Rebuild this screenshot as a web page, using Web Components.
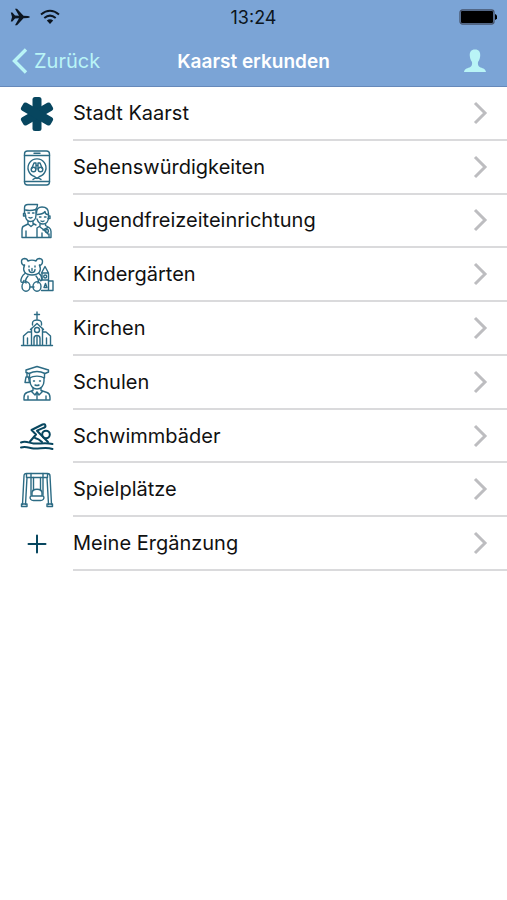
<!DOCTYPE html>
<html lang="de">
<head>
<meta charset="utf-8">
<meta name="viewport" content="width=device-width, initial-scale=1">
<title>Kaarst erkunden</title>
<style>
  body {
    margin: 0;
    background: #fff;
    color: #111;
    font-family: Inter, "Liberation Sans", sans-serif;
    --bar: #7ba4d6;
    --tint: #b9f4f6;
    --ink: #07465f;
    --ink-soft: #2c6b84;
  }
</style>
</head>
<body>
<explore-app></explore-app>

<script>
const ICONS = {
  asterisk: `
    <g fill="var(--ink)" stroke="none">
      <rect x="13.500" y="1" width="9" height="34" rx="2.500"/>
      <rect x="13.500" y="1" width="9" height="34" rx="2.500" transform="rotate(60 18 18)"/>
      <rect x="13.500" y="1" width="9" height="34" rx="2.500" transform="rotate(120 18 18)"/>
    </g>`,
  sights: `
    <rect x="5.500" y="1" width="25" height="34" rx="3"/>
    <path d="M5.500 5.500h25M5.500 31.500h25M15 3.200h6"/>
    <path d="M15.500 26.500a9 9 0 1 1 5 0l-2.500 2z"/>
    <path d="M14 29.500c1-1 2-1.500 4-1.500s3 .5 4 1.500"/>
    <path d="M12.500 19l2.500-6h2v6M23.500 19L21 13h-2v6M17 15.500h2"/>
    <circle cx="14.500" cy="19.500" r="2.300"/>
    <circle cx="21.500" cy="19.500" r="2.300"/>`,
  youth: `
    <path d="M5.500 10V5c0-2.500 1.500-3.500 3.500-3.500h9.500c0 2.500-.5 3.500-1.500 4.500v6c0 4-2.500 6.500-5.500 6.500S6.500 16 6.500 12z"/>
    <path d="M6.500 7c4 1 7 .5 10.500-.5M6 10.500H4.500v2.500h2M9 10h1.500M13.500 10H15M10 14.500q1.500 1 3 0"/>
    <path d="M9 18v3l-4 2c-1.500.5-2 2-2 4v7.500h15M14 18v2.500l3 1.500M9 21l3 2.500 3-2.500M7 34v-6"/>
    <path d="M17.500 10c0-4 2-6 5.500-6 4 0 6.500 2.500 6.500 6.500v3.500c0 4-2 7-5.500 7-3 0-5-2-6-5"/>
    <path d="M18 11.500c4 0 6.500-1 8-3 0 2 1.500 3 3 3M29.500 13h1.500v2.500h-2M20.500 14h1.500M25.500 14H27M22 18q1.500 1 3 0"/>
    <path d="M21 21v2l-3 2v9.500h12V31M26.500 20.500v2l3.500 2c1.500 1 2 2.500 2 4v6h-2M21 24l4 3 4 4M24 27l5-2.500M23 34v-4"/>
    <circle cx="28" cy="28" r="1.500"/>`,
  bear: `
    <path d="M5.500 8.500C2 8 1 2 5.500 1.500c2 0 3 1 3.500 2.500 2-1 6-1 8 0 .5-1.500 1.500-2.500 3.500-2.500 4.500.5 3.500 6.500 0 7"/>
    <path d="M5.500 8c-2 5-.5 10 7.500 10s9.500-5 7.500-10M10 9v1M16 9v1M13 11.500v2M10 12.500c0 4 6 4 6 0"/>
    <path d="M6 16.500c-3 2-4.500 6-4 8 .5 1.500 2.500 1 3-1M20 16.500c2 1.500 3 4 3 6-.5 2-2 1.500-2.500-.5M9 19c-2.500 3-3 5-2 7M17 19c2.500 3 3 5 2 7M11 30h4"/>
    <ellipse cx="7" cy="29.500" rx="4" ry="4.800"/>
    <ellipse cx="18" cy="29.500" rx="4" ry="4.800"/>
    <path d="M22.500 16l3.500-6.500 3.500 6.500zM23 16v7M29.500 16v7M22.500 23h7v10.500h-7M29.500 24H34v9.500h-4.500"/>
    <circle cx="26.200" cy="19.500" r="1.500"/>
    <path d="M25 30.500l1.500-4 1.500 4z"/>`,
  church: `
    <path d="M18 1v8M15.500 3.500h5M13.500 14v-2c0-1.500 2-3 4.500-3s4.500 1.500 4.500 3v2M11.500 18.500l6.500-6 6.500 6"/>
    <path d="M12.500 17.500V34M23.500 17.500V34M12 21H9l-4.500 4v9M24 21h3l4.500 4v9M2.500 34.500h31"/>
    <circle cx="18" cy="19" r="2.500"/>
    <path d="M15 34v-6.500c0-4 6-4 6 0V34M18 26v8M8.500 33v-6M27.500 33v-6"/>`,
  graduate: `
    <path d="M7 5L18 1.500 29.500 5v2L26 8.500c-5-2.500-11-2.500-16 0L7 7.500z"/>
    <path d="M10.500 8.500V13c4-2.500 11-2.500 15 0V8.500M8 7.500V12M7 12h2.500l1 5.500H6z"/>
    <path d="M11 13v3c0 4.500 3 8 7 8s7-3.500 7-8v-3M14.500 16h1M20.500 16h1M16 20q2 1 4 0"/>
    <path d="M14 23v2.500l-6 2c-2.500 1-3 3-3 5V35h26v-2.500c0-2-.5-4-3-5l-6-2V23M12 26l4 4 2-3 2 3 4-4M18 27v7M9 34v-3M27 34v-3"/>`,
  swimmer: `
    <g stroke="var(--ink)" stroke-width="2">
      <path d="M11 22.500l6-7-4.500-4.500L23.500 5.500c3-1.300 4 2.200 1.500 3.200l-7 3L29 23"/>
      <circle cx="27" cy="15.500" r="3.800"/>
      <path d="M2 23.500c5-2 8 .5 12.500 1 6 .7 11-1.500 19 .5M2 28.500c5-1.500 8 .5 12.500 1 6 .7 12-2 19 .5"/>
      <path d="M16 19c3 .5 5 2 7 4"/>
    </g>`,
  swing: `
    <path d="M3.500 32.500L5 4c0-2 1-2.500 2.500-2.500h21C30 1.500 31 2 31 4l1.500 28.500M6.500 32.500L8 5.500h20l1.500 27M7.500 1.500v4M28.500 1.500v4"/>
    <path d="M12 1.500v21M14.500 5.500v13M21.500 5.500v13M24 1.500v21"/>
    <path d="M13 24v-3c0-5 10-5 10 0v3M11.500 24h13c1.500 3-1 4.500-3 4.500h-7c-2 0-4.500-1.500-3-4.500z"/>
    <path d="M2.500 32h5.500v2.500H2.500zM28 32h5.500v2.500H28z"/>`,
  plus: `
    <path d="M18 9.500v17M9.500 18h17" stroke="var(--ink)" stroke-width="2"/>`
};

const ENTRIES = [
  ['asterisk', 'Stadt Kaarst'],
  ['sights', 'Sehenswürdigkeiten'],
  ['youth', 'Jugendfreizeiteinrichtung'],
  ['bear', 'Kindergärten'],
  ['church', 'Kirchen'],
  ['graduate', 'Schulen'],
  ['swimmer', 'Schwimmbäder'],
  ['swing', 'Spielplätze'],
  ['plus', 'Meine Ergänzung']
];

class StatusBar extends HTMLElement {
  constructor() {
    super();
    this.attachShadow({ mode: 'open' }).innerHTML = `
      <style>
        :host {
          display: grid;
          grid-template-columns: 1fr auto 1fr;
          align-items: center;
          height: 34px;
          padding: 0 10px;
          color: #0c1520;
          font-size: 18px;
        }
        svg { display: block; }
        .radios { display: flex; align-items: center; gap: 10px; }
        .battery { justify-self: end; }
      </style>
      <div class="radios">
        <svg width="20" height="18" viewBox="0 0 20 18" fill="currentColor" aria-hidden="true">
          <path d="M.800 4.500h1.600L5 7.500l4 .2L5 .8h2l6.500 7 4.500.2c2.300.2 2.300 1.800 0 2l-4.500.2-6.500 7H5l4-6.900-4 .2-2.600 3H.8L2 9z"/>
        </svg>
        <svg width="20" height="16" viewBox="0 0 20 16" fill="none" stroke="currentColor" stroke-width="2" aria-hidden="true">
          <path d="M1 5.500q9-7.500 18 0M4.300 9q5.700-4.700 11.400 0"/>
          <path d="M6.800 11.500q3.200-2.500 6.400 0L10 15z" fill="currentColor" stroke="none"/>
        </svg>
      </div>
      <time>13:24</time>
      <svg class="battery" width="38" height="16" viewBox="0 0 38 16" aria-hidden="true">
        <rect x="1" y="1" width="34" height="14" rx="2.500" fill="none" stroke="#46536c" stroke-width="1.300"/>
        <rect x="2" y="2" width="32" height="12" rx="1"/>
        <path d="M36 5c3 1 3 5 0 6z"/>
      </svg>
    `;
  }
}

class NavBar extends HTMLElement {
  constructor() {
    super();
    this.attachShadow({ mode: 'open' }).innerHTML = `
      <style>
        :host {
          display: grid;
          grid-template-columns: 1fr auto 1fr;
          align-items: center;
          height: 50px;
          padding: 2px 12px 0;
          border-bottom: 1px solid #6689ba;
        }
        a {
          display: flex;
          align-items: center;
          gap: 6px;
          color: var(--tint);
          font-size: 20px;
          text-decoration: none;
        }
        h1 { margin: 0; color: #fff; font-size: 19px; font-weight: 600; }
        button {
          justify-self: end;
          padding: 0 8px;
          border: 0;
          background: none;
          color: var(--tint);
        }
        svg { display: block; }
      </style>
      <a href="#zurueck">
        <svg width="16" height="26" viewBox="0 0 16 26" fill="none" stroke="currentColor" stroke-width="3.400" aria-hidden="true">
          <path d="M14 1.500L2.500 13 14 24.500"/>
        </svg>
        <slot name="back"></slot>
      </a>
      <h1><slot></slot></h1>
      <button type="button" aria-label="Profil">
        <svg width="24" height="24" viewBox="0 0 24 24" fill="currentColor" aria-hidden="true">
          <path d="M12 .500c4 0 5.500 2.500 5.200 6.500-.3 3.500-1.700 5-2.200 6-.3 2.500 0 4.500 2.500 5.500 3 1 5 1.500 5.500 4.500H1c.5-3 2.500-3.500 5.500-4.500 2.500-1 2.800-3 2.500-5.500-.5-1-1.900-2.500-2.200-6C6.500 3 8 .5 12 .5z"/>
        </svg>
      </button>
    `;
  }
}

class ExploreRow extends HTMLElement {
  constructor() {
    super();
    this.attachShadow({ mode: 'open' });
  }

  connectedCallback() {
    this.setAttribute('role', 'listitem');
    this.shadowRoot.innerHTML = `
      <style>
        :host { display: block; }
        a {
          display: flex;
          gap: 18px;
          height: 100%;
          padding-left: 19px;
          color: inherit;
          font-size: 20px;
          text-decoration: none;
        }
        .icon {
          flex: none;
          align-self: center;
          fill: none;
          stroke: var(--ink-soft);
          stroke-width: 1.4;
          stroke-linecap: round;
          stroke-linejoin: round;
        }
        .label {
          flex: 1;
          display: flex;
          align-items: center;
          justify-content: space-between;
          padding-right: 19px;
          border-bottom: 2px solid #dadadc;
        }
        .chevron { flex: none; fill: none; stroke: #bdbdc0; stroke-width: 3; }
      </style>
      <a href="#${this.getAttribute('icon')}">
        <svg class="icon" width="36" height="36" viewBox="0 0 36 36" aria-hidden="true">${ICONS[this.getAttribute('icon')]}</svg>
        <span class="label">
          <slot></slot>
          <svg class="chevron" width="16" height="24" viewBox="0 0 16 24" aria-hidden="true"><path d="M3 2l10 10L3 22"/></svg>
        </span>
      </a>
    `;
  }
}

class ExploreApp extends HTMLElement {
  constructor() {
    super();
    this.attachShadow({ mode: 'open' });
  }

  connectedCallback() {
    const rows = ENTRIES
      .map(([icon, label]) => `<explore-row icon="${icon}">${label}</explore-row>`)
      .join('');

    this.shadowRoot.innerHTML = `
      <style>
        :host { display: block; }
        header { background: var(--bar); }
        main {
          display: grid;
          grid-auto-rows: 1fr;
          min-height: 484px;
        }
      </style>
      <header>
        <status-bar></status-bar>
        <nav-bar><span slot="back">Zurück</span>Kaarst erkunden</nav-bar>
      </header>
      <main role="list">${rows}</main>
    `;
  }
}

customElements.define('status-bar', StatusBar);
customElements.define('nav-bar', NavBar);
customElements.define('explore-row', ExploreRow);
customElements.define('explore-app', ExploreApp);
</script>
</body>
</html>
